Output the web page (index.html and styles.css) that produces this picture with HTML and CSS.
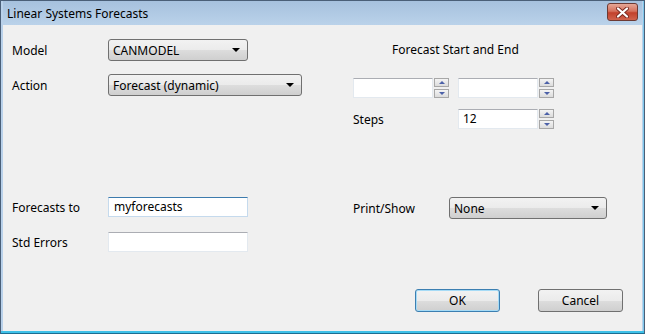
FILE: index.html
```html
<!DOCTYPE html>
<html lang="en">
<head>
    <meta charset="UTF-8">
    <title>Linear Systems Forecasts</title>
    <link rel="stylesheet" href="styles.css">
</head>
<body>

<div class="window">
    <div class="titlebar">
        <span class="title">Linear Systems Forecasts</span>
        <button class="close-btn">
            <svg width="13" height="11" viewBox="0 0 13 11">
                <path d="M2 1.5 L11 9.5 M11 1.5 L2 9.5" stroke="#7a2a20" stroke-width="4" stroke-linecap="round"/>
                <path d="M2 1.5 L11 9.5 M11 1.5 L2 9.5" stroke="#fff" stroke-width="2.2" stroke-linecap="round"/>
            </svg>
        </button>
    </div>

    <div class="dialog-body">
        <div class="columns">
            <div class="col-left">
                <div class="row row-model">
                    <label class="label">Model</label>
                    <div class="combo combo-model">
                        <span>CANMODEL</span>
                        <span class="arrow"></span>
                    </div>
                </div>
                <div class="row row-action">
                    <label class="label">Action</label>
                    <div class="combo combo-action">
                        <span>Forecast (dynamic)</span>
                        <span class="arrow"></span>
                    </div>
                </div>
                <div class="row row-fcto">
                    <label class="label">Forecasts to</label>
                    <div class="textbox focused">myforecasts</div>
                </div>
                <div class="row row-stderr">
                    <label class="label">Std Errors</label>
                    <div class="textbox"></div>
                </div>
            </div>

            <div class="col-right">
                <div class="heading">Forecast Start and End</div>
                <div class="spin-row">
                    <div class="spin">
                        <div class="spin-box"></div>
                        <div class="spin-btns">
                            <span class="spin-btn"><span class="up"></span></span>
                            <span class="spin-btn"><span class="down"></span></span>
                        </div>
                    </div>
                    <div class="spin">
                        <div class="spin-box"></div>
                        <div class="spin-btns">
                            <span class="spin-btn"><span class="up"></span></span>
                            <span class="spin-btn"><span class="down"></span></span>
                        </div>
                    </div>
                </div>
                <div class="row row-steps">
                    <label class="label-r">Steps</label>
                    <div class="spin">
                        <div class="spin-box">12</div>
                        <div class="spin-btns">
                            <span class="spin-btn"><span class="up"></span></span>
                            <span class="spin-btn"><span class="down"></span></span>
                        </div>
                    </div>
                </div>
                <div class="row row-print">
                    <label class="label-p">Print/Show</label>
                    <div class="combo combo-print">
                        <span>None</span>
                        <span class="arrow"></span>
                    </div>
                </div>
            </div>
        </div>

        <div class="footer">
            <button class="btn btn-default">OK</button>
            <button class="btn">Cancel</button>
        </div>
    </div>
</div>

</body>
</html>
```

FILE: styles.css
```css
* {
    box-sizing: border-box;
}

body {
    margin: 0;
    background: #fff;
    font: 12px "Noto Sans", "DejaVu Sans", sans-serif;
    color: #000;
}

.window {
    width: 645px;
    height: 334px;
    border: 1px solid #4a5f78;
    border-bottom-color: #1c6e92;
    background: #b9d1ea;
    display: flex;
    flex-direction: column;
    padding: 0 2px 2px 2px;
    box-shadow: inset 0 -2px 0 #3fc1e8, inset -1px 0 0 #7ec8ec;
}

.titlebar {
    height: 24px;
    flex-shrink: 0;
    display: flex;
    align-items: center;
    justify-content: space-between;
    padding: 0 4px 0 4px;
    background: linear-gradient(#a6c1de, #bad2ea);
}

.title {
    font-size: 12px;
    color: #000;
}

.close-btn {
    width: 31px;
    height: 18px;
    margin-top: -2px;
    border: 1px solid #6d3a33;
    border-radius: 3px;
    background: linear-gradient(#e6a797, #d5715d 45%, #c2412c 55%, #d0634d);
    display: flex;
    align-items: center;
    justify-content: center;
    padding: 0;
}

.dialog-body {
    flex: 1;
    background: #f0f0f0;
    display: flex;
    flex-direction: column;
    padding: 14px 0 0 9px;
}

.columns {
    display: flex;
}

.col-left {
    width: 341px;
    display: flex;
    flex-direction: column;
}

.row {
    display: flex;
    align-items: center;
}

.label {
    width: 96px;
}

.row-action {
    margin-top: 13px;
}

.row-fcto {
    margin-top: 101px;
}

.row-stderr {
    margin-top: 15px;
}

.combo {
    height: 22px;
    border: 1px solid #707070;
    border-radius: 3px;
    background: linear-gradient(#f2f2f2 0%, #ebebeb 50%, #dddddd 51%, #cfcfcf 100%);
    display: flex;
    align-items: center;
    justify-content: space-between;
    padding: 0 7px 0 4px;
}

.combo-model {
    width: 140px;
}

.combo-action {
    width: 194px;
}

.combo-print {
    width: 158px;
}

.arrow {
    width: 0;
    height: 0;
    border-left: 4px solid transparent;
    border-right: 4px solid transparent;
    border-top: 4px solid #000;
}

.textbox {
    width: 140px;
    height: 20px;
    background: #fff;
    border: 1px solid #e3e9ef;
    border-top-color: #abadb3;
    padding: 1px 5px;
    line-height: 16px;
}

.textbox.focused {
    border-color: #c5daed;
    border-top-color: #3d7bad;
}

.col-right {
    display: flex;
    flex-direction: column;
}

.heading {
    height: 22px;
    line-height: 22px;
    padding-left: 39px;
}

.spin-row {
    display: flex;
    gap: 9px;
    margin-top: 17px;
}

.spin {
    display: flex;
    gap: 1px;
}

.spin-box {
    width: 80px;
    height: 20px;
    background: #fff;
    border: 1px solid #e3e9ef;
    border-top-color: #abadb3;
    padding: 1px 4px;
    line-height: 16px;
}

.spin-btns {
    display: flex;
    flex-direction: column;
    justify-content: space-between;
    height: 20px;
}

.spin-btn {
    width: 15px;
    height: 9px;
    border: 1px solid #a7a7a7;
    background: linear-gradient(#f4f4f4, #dcdcdc);
    display: flex;
    align-items: center;
    justify-content: center;
}

.up {
    border-left: 3px solid transparent;
    border-right: 3px solid transparent;
    border-bottom: 3px solid #4c61a8;
}

.down {
    border-left: 3px solid transparent;
    border-right: 3px solid transparent;
    border-top: 3px solid #4c61a8;
}

.row-steps {
    margin-top: 11px;
}

.label-r {
    width: 105px;
}

.row-print {
    margin-top: 68px;
}

.label-p {
    width: 96px;
}

.footer {
    display: flex;
    gap: 38px;
    margin: 37px 0 0 403px;
}

.btn {
    width: 85px;
    height: 23px;
    border: 1px solid #707070;
    border-radius: 3px;
    background: linear-gradient(#f2f2f2 0%, #ebebeb 50%, #dddddd 51%, #cfcfcf 100%);
    font: inherit;
    padding: 0;
}

.btn-default {
    border-color: #3c7fb1;
    box-shadow: inset 0 0 0 1px #a6dbf6;
}
```
